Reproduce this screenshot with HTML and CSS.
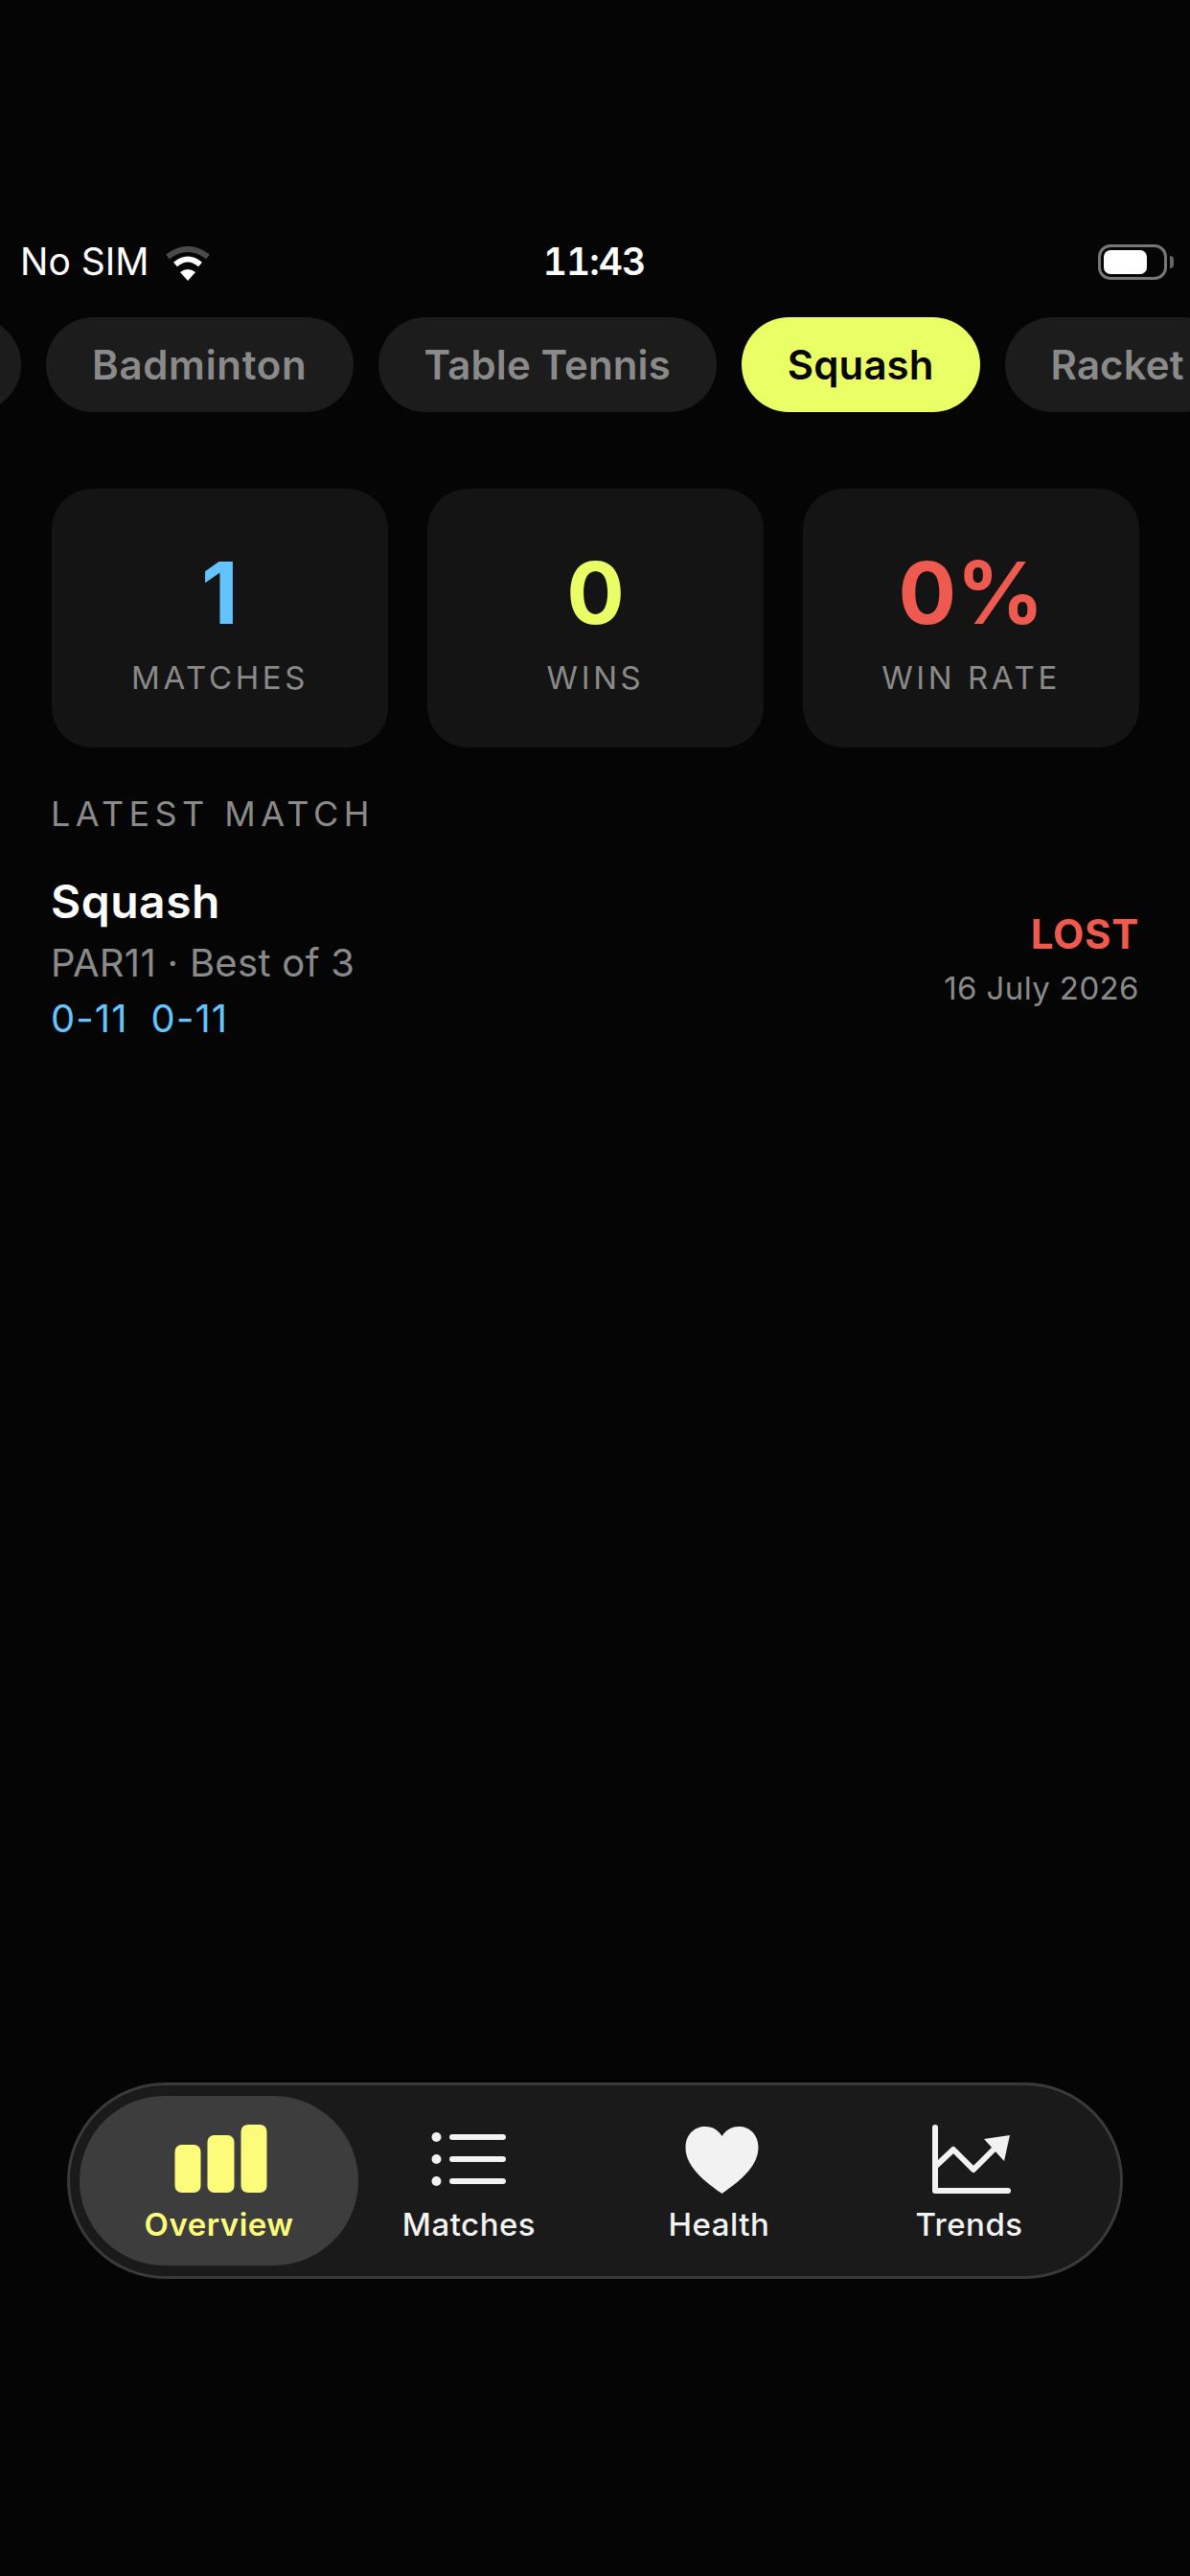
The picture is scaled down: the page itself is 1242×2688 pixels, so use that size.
FILE: index.html
```html
<!DOCTYPE html>
<html lang="en">
<head>
<meta charset="utf-8">
<title>Overview</title>
<link rel="stylesheet" href="styles.css">
</head>
<body>
<div class="app">
  <header class="status">
    <div class="status-left">
      <span>No SIM</span>
      <svg class="wifi" viewBox="0 0 48 36">
        <path class="wifi-outer" d="M3 11Q24-5 45 11"/>
        <path class="wifi-mid" d="M11 19Q24 8 37 19"/>
        <path class="wifi-core" d="M16 27Q24 21 32 27L24 36Z"/>
      </svg>
    </div>
    <time class="clock">11:43</time>
    <div class="status-right">
      <div class="battery"><div class="battery-level"></div></div>
      <div class="battery-cap"></div>
    </div>
  </header>

  <nav class="sports">
    <a class="pill pill-first"></a>
    <a class="pill pill-tracked">Badminton</a>
    <a class="pill">Table Tennis</a>
    <a class="pill pill-active">Squash</a>
    <a class="pill">Racket</a>
  </nav>

  <main class="content">
    <section class="stats">
      <div class="stat">
        <div class="stat-value blue">1</div>
        <div class="stat-label">MATCHES</div>
      </div>
      <div class="stat">
        <div class="stat-value lime">0</div>
        <div class="stat-label">WINS</div>
      </div>
      <div class="stat">
        <div class="stat-value red">0%</div>
        <div class="stat-label">WIN RATE</div>
      </div>
    </section>

    <h2 class="section-title">LATEST MATCH</h2>

    <article class="match">
      <div class="match-info">
        <div class="match-sport">Squash</div>
        <div class="match-meta">PAR11 · Best of 3</div>
        <div class="match-scores"><span>0-11</span><span>0-11</span></div>
      </div>
      <div class="match-result">
        <div class="match-outcome">LOST</div>
        <div class="match-date">16 July 2026</div>
      </div>
    </article>
  </main>

  <nav class="tabbar">
    <a class="tab tab-active">
      <svg class="tab-icon" viewBox="0 0 100 72">
        <rect x="3.5" y="21" width="27" height="50" rx="7"/>
        <rect x="37.5" y="11" width="28" height="60" rx="7"/>
        <rect x="72.5" y="0" width="27" height="71" rx="7"/>
      </svg>
      <span class="tab-label">Overview</span>
    </a>
    <a class="tab">
      <svg class="tab-icon" viewBox="0 0 100 72">
        <circle cx="15.5" cy="13" r="5"/>
        <circle cx="15.5" cy="36" r="5"/>
        <circle cx="15.5" cy="59" r="5"/>
        <path class="tab-stroke" d="M32 13H85M32 36H85M32 59H85"/>
      </svg>
      <span class="tab-label">Matches</span>
    </a>
    <a class="tab">
      <svg class="tab-icon" viewBox="0 0 100 72">
        <path d="M52.5 72C40 63 14.5 46 14.5 24C14.5 10 24 2 35 2C43 2 49 6 52.5 12C56 6 62 2 70 2C81 2 90.5 10 90.5 24C90.5 46 65 63 52.5 72Z"/>
      </svg>
      <span class="tab-label">Health</span>
    </a>
    <a class="tab">
      <svg class="tab-icon" viewBox="0 0 100 72">
        <path class="tab-stroke" d="M14 3V69H90"/>
        <path class="tab-stroke" d="M16 42L33 26L54 47L78 23"/>
        <path d="M92 11L65 15L86 38Z"/>
      </svg>
      <span class="tab-label">Trends</span>
    </a>
  </nav>
</div>
</body>
</html>
```
FILE: styles.css
```css
* {
  box-sizing: border-box;
}

html,
body {
  margin: 0;
  background: #050505;
}

body {
  font-family: Inter, "Liberation Sans", sans-serif;
  color: #fff;
}

.app {
  display: flex;
  flex-direction: column;
  width: 1242px;
  height: 2688px;
  overflow: hidden;
  padding-top: 248px;
}

/* Status bar */
.status {
  display: grid;
  grid-template-columns: 1fr auto 1fr;
  align-items: center;
  height: 50px;
  padding: 0 17px 0 21px;
  font-size: 39px;
  line-height: 50px;
}

.status-left {
  display: flex;
  align-items: center;
  gap: 17px;
}

.wifi {
  width: 48px;
  height: 36px;
  margin-top: 3px;
}

.wifi-outer,
.wifi-mid {
  fill: none;
  stroke-width: 6;
}

.wifi-outer {
  stroke: #4a4a4a;
}

.wifi-mid {
  stroke: #fff;
}

.wifi-core {
  fill: #fff;
}

.clock {
  margin-right: 6px;
  font-variant-numeric: tabular-nums;
  font-weight: 600;
  letter-spacing: -1px;
}

.status-right {
  display: flex;
  align-items: center;
  justify-content: flex-end;
  gap: 3px;
}

.battery {
  display: flex;
  align-items: center;
  width: 72px;
  height: 37px;
  padding-left: 3px;
  border: 3px solid #777;
  border-radius: 13px;
}

.battery-level {
  width: 45px;
  height: 25px;
  border-radius: 7px;
  background: #fff;
}

.battery-cap {
  width: 4px;
  height: 13px;
  border-radius: 0 4px 4px 0;
  background: #666;
}

/* Sport filter */
.sports {
  display: flex;
  gap: 26px;
  margin-top: 33px;
  white-space: nowrap;
}

.pill {
  flex: none;
  height: 99px;
  padding: 0 48px;
  border-radius: 50px;
  background: #1c1c1c;
  color: #8a8a8a;
  font-size: 42px;
  font-weight: 600;
  letter-spacing: 0.1px;
  line-height: 99px;
}

.pill-tracked {
  letter-spacing: 0.7px;
}

.pill-first {
  width: 120px;
  margin-left: -98px;
}

.pill-active {
  background: #eaff66;
  color: #050505;
}

/* Overview content */
.content {
  padding: 0 53px;
}

.stats {
  display: grid;
  grid-template-columns: repeat(3, 1fr);
  gap: 41px;
  margin: 80px 0 0 1px;
}

.stat {
  height: 270px;
  padding-top: 61px;
  border-radius: 42px;
  background: #141414;
  text-align: center;
}

.stat-value {
  font-size: 90px;
  font-weight: 700;
  line-height: 96px;
}

.stat-label {
  margin-top: 20px;
  color: #8a8a8a;
  font-size: 33px;
  letter-spacing: 3.6px;
  line-height: 40px;
}

.blue {
  color: #64c4ff;
}

.lime {
  color: #eaff66;
}

.red {
  color: #ef5a50;
}

.section-title {
  margin: 49px 0 0;
  color: #8a8a8a;
  font-size: 36px;
  font-weight: 400;
  letter-spacing: 5.4px;
  line-height: 40px;
}

.match {
  display: flex;
  align-items: center;
  justify-content: space-between;
  margin-top: 44px;
}

.match-sport {
  font-size: 48px;
  font-weight: 600;
  letter-spacing: 0.5px;
  line-height: 56px;
}

.match-meta {
  margin-top: 12px;
  color: #8a8a8a;
  font-size: 40px;
  letter-spacing: 0.3px;
  line-height: 48px;
}

.match-scores {
  display: flex;
  gap: 24px;
  margin-top: 10px;
  color: #64c4ff;
  font-size: 40px;
  letter-spacing: 1.1px;
  line-height: 48px;
}

.match-result {
  text-align: right;
}

.match-outcome {
  color: #ef5a50;
  font-size: 42px;
  font-weight: 700;
  letter-spacing: 0.7px;
  line-height: 50px;
}

.match-date {
  margin-top: 11px;
  color: #8a8a8a;
  font-size: 33px;
  letter-spacing: 0.4px;
  line-height: 40px;
}

/* Tab bar */
.tabbar {
  display: flex;
  width: 1102px;
  height: 205px;
  margin: auto 0 310px 70px;
  padding: 11px 10px;
  border: 3px solid #3a3a3a;
  border-radius: 103px;
  background: #1a1a1a;
}

.tab {
  display: flex;
  flex: none;
  flex-direction: column;
  align-items: center;
  width: 291px;
  height: 177px;
  padding-top: 30px;
  border-radius: 89px;
  color: #f2f2f2;
}

.tab + .tab {
  margin-left: -30px;
}

.tab-active {
  background: #3d3d3d;
  color: #fdfc7a;
}

.tab-icon {
  width: 100px;
  height: 72px;
  fill: currentColor;
}

.tab-stroke {
  fill: none;
  stroke: currentColor;
  stroke-width: 6;
  stroke-linecap: round;
  stroke-linejoin: round;
}

.tab-label {
  margin-top: 12px;
  font-size: 33px;
  font-weight: 500;
  letter-spacing: 0.5px;
  line-height: 40px;
}

.tab-active .tab-label {
  font-weight: 600;
}
```
